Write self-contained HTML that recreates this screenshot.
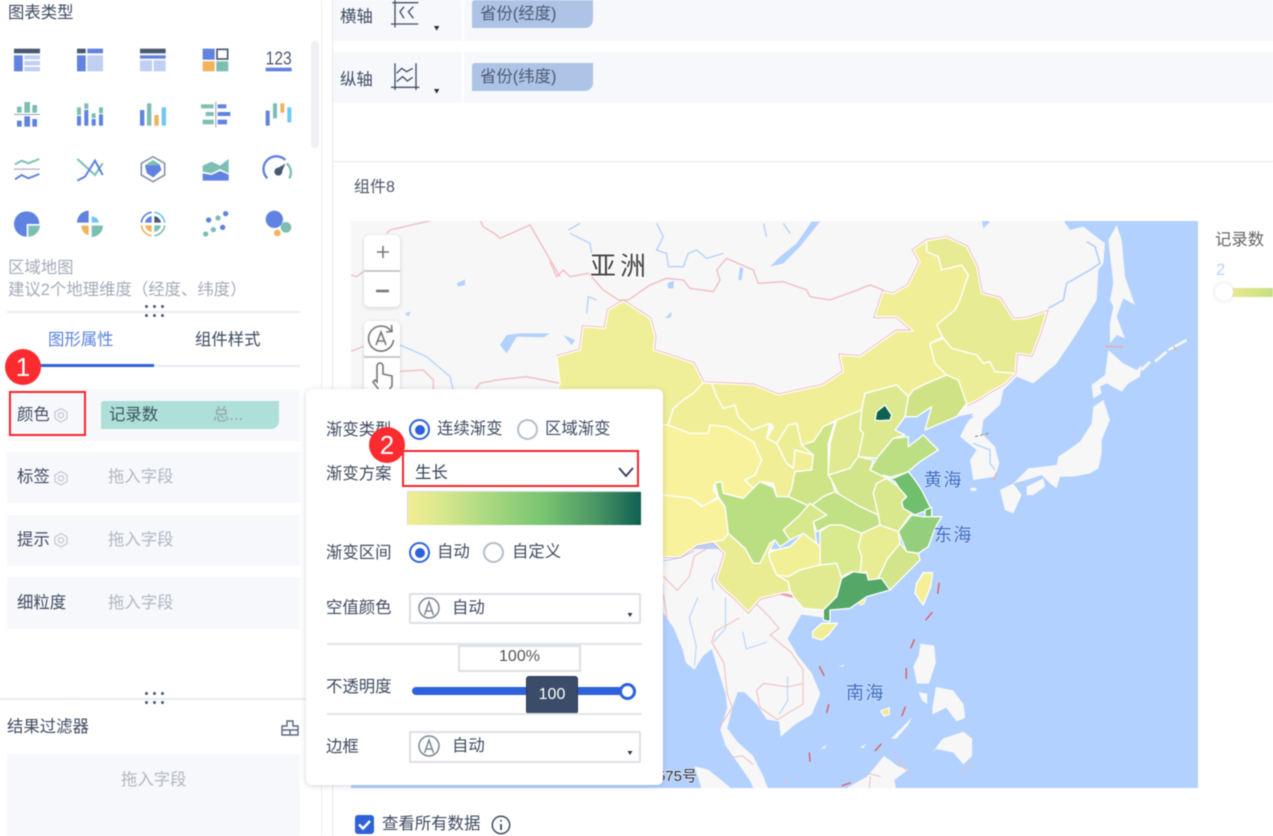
<!DOCTYPE html>
<html lang="zh"><head><meta charset="utf-8"><title>区域地图</title>
<style>
html,body{margin:0;padding:0;background:#fff}
#w{position:relative;width:1273px;height:836px;overflow:hidden;background:#fff;font-family:"Liberation Sans","Noto Sans CJK SC",sans-serif;font-size:16.4px;color:#3f4b60;filter:blur(.45px)}
.t{position:absolute;white-space:nowrap;line-height:20px;height:20px;margin-top:2px}
.b{position:absolute}
.g{color:#b1b6c1}
.row{position:absolute;left:7px;width:293px;background:#f7f8fc}
.pill{position:absolute;background:#aec4e6;border-radius:3px 0 8px 0;width:121px;height:28px;left:472px}
.dots{position:absolute;width:3px;height:3px;background:#4a5872;border-radius:50%;box-shadow:8px 0 #4a5872,16px 0 #4a5872}
.radio{position:absolute;width:21px;height:21px;box-sizing:border-box;border-radius:50%;border:2px solid #b4bccb;background:#fff}
.radio.on{border-color:#2f62d9}
.radio.on:after{content:"";position:absolute;left:3.5px;top:3.5px;width:10px;height:10px;border-radius:50%;background:#2f62d9}
.sel{position:absolute;left:409px;width:232px;box-sizing:border-box;border:2px solid #dde0e6;border-radius:2px;background:#fff}
.hr{position:absolute;left:327px;width:315px;height:2px;background:#e1e4e9}
.badge{position:absolute;width:36px;height:36px;border-radius:50%;background:#fb2b30;color:#fff;font:26px/36px "Liberation Sans",sans-serif;text-align:center}
.red{position:absolute;box-sizing:border-box;border:2px solid #f4252d}
</style></head><body><div id="w">

<!-- MAP -->
<svg class="b" style="left:0;top:0" width="1273" height="836" viewBox="0 0 1273 836">
<defs><clipPath id="mc"><rect x="351" y="221" width="847" height="567"/></clipPath></defs>
<g clip-path="url(#mc)">
<rect x="351" y="221" width="847" height="567" fill="#b3d1ff"/>
<!-- z10 land -->
<g transform="translate(960 220) scale(.33333)" fill="#f7f7f7">
<path d="M-1830,0 L310,0 L330,30 L370,20 L435,70 L430,130 L415,150 L410,240 L350,340 L290,430 L220,490 L170,470 L130,510 L120,555 L70,600 L65,640 L105,680 L118,730 L105,770 L40,780 L30,720 L50,690 L0,650 L15,620 L40,580 L-10,590 L-30,500 L-300,500 L-300,900 L-1830,900 Z"/>
<path d="M470,15 L485,60 L495,170 L525,255 L490,235 L470,290 L495,355 L470,345 L450,370 L450,310 L460,260 L450,240 L460,190 L445,60 Z"/>
<path d="M445,390 L490,430 L530,450 L545,435 L540,470 L505,490 L485,515 L440,490 L420,500 L425,520 L400,535 L395,495 L435,465 Z"/>
<path d="M430,540 L450,600 L425,660 L425,700 L415,745 L390,760 L340,770 L300,770 L290,805 L270,790 L245,765 L200,780 L160,790 L205,745 L290,735 L295,710 L325,690 L360,665 L395,610 L400,560 Z"/>
<path d="M200,800 L250,775 L255,800 L220,825 L200,825 Z"/>
<path d="M120,810 L160,790 L185,825 L160,880 L135,870 Z"/>
<ellipse cx="40" cy="808" rx="10" ry="5"/>
<path d="M545,450 L570,425 M585,425 L620,395 M625,390 L680,360" stroke="#f7f7f7" stroke-width="8" fill="none"/>
<path d="M265,265 L310,240 L320,190 L390,150 L420,130 L405,80 L380,65" stroke="#b3d1ff" stroke-width="5" fill="none"/>
<path d="M0,610 L40,590 M40,670 L90,690 L90,730 L105,750" stroke="#b3d1ff" stroke-width="4" fill="none"/>
<path d="M45,650 L85,640" stroke="#999" stroke-width="4" stroke-dasharray="10 6" fill="none"/>
<path d="M435,380 L490,380 M100,780 L110,758 M640,378 L650,392" stroke="#eba8ad" stroke-width="4" fill="none"/>
<path d="M65,0 L90,5 L70,25Z" fill="#b3d1ff"/>
</g>
<g transform="translate(660 480) scale(.34483)" >
<path d="M-800,300 L10,300 L10,385 L40,430 L65,490 L75,530 L100,550 L125,510 L150,490 L165,540 L190,620 L195,660 L175,725 L190,770 L225,820 L260,870 L285,925 L325,925 L300,860 L270,800 L225,760 L195,720 L210,660 L225,615 L245,615 L280,650 L310,695 L345,700 L350,745 L390,710 L440,680 L465,620 L440,560 L400,510 L370,460 L410,390 L480,400 L480,200 L-800,200 Z" fill="#f7f7f7"/>
<path d="M100,830 L140,840 L190,880 L240,925 L130,925 Z M755,475 L795,480 L800,530 L780,590 L745,590 L735,540 L750,510 Z M750,615 L775,620 L775,650 L760,640 Z M800,600 L850,610 L880,650 L885,690 L860,700 L830,660 L790,680 L790,660 Z M790,790 L820,750 L880,730 L905,750 L905,800 L880,825 L850,790 L800,780 Z M670,750 L730,690 L720,710 L685,750 Z M510,925 L530,900 L600,860 L650,800 L690,830 L720,840 L680,870 L690,925 Z M580,775 L598,765 L590,778 Z M518,540 L535,535 L530,542 Z M465,780 L482,768 L478,778 Z" fill="#f7f7f7"/>
<g fill="none" stroke="#f0bcc0" stroke-width="3">
<path d="M10,280 L50,320 L85,280 L100,220 L150,190"/>
<path d="M20,400 L10,330 M280,360 L320,400 L345,430 L320,450 L380,500 L415,550 L415,590 L370,600 L300,590 L280,610 L290,660 L340,695 L415,650 L415,590"/>
<path d="M230,400 L160,440 L150,470 L185,530 L195,620 L210,660 L170,720"/>
<path d="M200,805 L240,800 L270,825 M610,860 L605,920 M600,850 L640,860 M680,800 L720,850 M905,818 L878,850 M360,880 L368,873 M350,900 L353,920 M470,900 L470,915 M1010,910 L1010,925 L1030,925"/>
</g>
<g fill="none" stroke="#b3d1ff" stroke-width="3">
<path d="M155,320 L150,290 L160,270 M110,340 L85,400 L105,480 L100,540 M190,340 L190,430 L155,470 M10,235 L60,225 L100,205 M240,440 L250,490 L310,470 M370,570 L370,640 L345,680"/>
</g>
<g fill="none" stroke="#e0595f" stroke-width="4">
<path d="M810,298 L805,330 M790,383 L770,407 M738,462 L727,488 M714,545 L714,577 M712,657 L701,685 M642,765 L623,786 M553,878 L527,887 M433,790 L435,817 M490,650 L483,675 M462,540 L476,568"/>
</g>
</g>
<!-- z7 west -->
<g transform="translate(340 220) scale(.33333)" fill="none">
<g stroke="#f0bcc0" stroke-width="4"><path d="M30,165 L50,170 L70,155 M140,40 L150,30 L280,0 M420,0 L430,20 L470,45 L480,55 L570,15 L660,170 M30,395 L70,380 M80,480 L80,460 L250,450 L280,480 L280,510 M405,510 L420,490 L470,480 L560,470 L660,490"/></g>
<path d="M70,405 L180,375 L260,410 L330,470 L340,510" stroke="#b3d1ff" stroke-width="4"/>
<path d="M480,375 L500,345 L540,340 L630,340 L610,352 L530,350 L500,400 Z" fill="#b3d1ff"/>
<path d="M350,190 L375,178 L375,195 L355,200Z M195,280 L212,275 L205,290Z" fill="#b3d1ff"/>
</g>
<!-- z5 north -->
<g transform="translate(550 220) scale(.33333)" fill="none">
<g stroke="#f0bcc0" stroke-width="4"><path d="M0,125 L20,170 L40,150 L60,170 L115,160 L160,210 L205,240 L235,240 L300,195 L350,175 L400,180 L420,205 L490,215 L510,180 L500,150 L530,115 L610,150 L625,190 L700,185 L770,210 L780,230 L840,240 L910,215 L960,195 L1000,210"/></g>
<g stroke="#b3d1ff" stroke-width="4"><path d="M55,30 L90,10 M60,40 L120,70 L125,100 M320,10 L340,50 L320,90 L350,100 L355,140 L400,140 L415,100 L440,90 L470,115 L520,100 M110,280 L115,230 L140,240 M640,10 L650,50 M700,10 L720,40"/></g>
<path d="M660,140 L700,130 L750,80 L810,5 L785,5 L740,70 L690,110 Z M352,190 L372,182 L370,205 L355,205 Z M565,180 L570,140 L580,145 L575,180 Z M40,345 L75,360 L65,375 Z M345,295 L365,275 L362,292 Z" fill="#b3d1ff"/>
</g>
<!-- China -->
<g transform="translate(660 400) scale(.33333)">
<path d="M-310,-130 L-240,-150 L-230,-220 L-165,-215 L-155,-270 L-110,-297 L-30,-245 L-15,-190 L-20,-150 L100,-110 L130,-52 L280,-45 L355,-15 L490,-45 L550,-85 L540,-135 L600,-130 L710,-207 L760,-207 L710,-250 L645,-250 L670,-325 L700,-318 L745,-345 L780,-415 L760,-450 L800,-478 L860,-488 L920,-460 L950,-400 L965,-320 L1020,-305 L1060,-242 L1100,-245 L1160,-265 L1140,-200 L1115,-135 L1070,-140 L1065,-80 L1035,-50 L990,-25 L960,-5 L920,15" fill="none" stroke="#f0a6ab" stroke-width="8"/>
<path d="M-20,470 L60,470 L110,435 L160,425 L195,460 L170,540 L190,565 L220,590 L265,635 L300,595 L360,580 L400,590" fill="none" stroke="#ee9fa5" stroke-width="8"/>
<g stroke="#fff" stroke-width="4" stroke-linejoin="round">
<polygon fill="#f0ef99" points="-310,-130 -240,-150 -230,-220 -165,-215 -155,-270 -110,-297 -30,-245 -15,-190 -20,-150 100,-110 130,-52 100,-20 70,0 40,25 25,75 -350,75 -300,-50"/>
<polygon fill="#f8f29d" points="-350,75 25,75 90,100 145,100 150,75 200,80 280,125 305,180 285,225 255,240 285,270 300,245 250,295 190,280 185,245 165,250 160,270 175,290 130,320 95,295 10,285 -350,285"/>
<polygon fill="#f8f29d" points="-350,285 10,285 95,295 125,320 175,295 195,320 205,400 190,420 160,425 110,435 60,470 -350,470"/>
<polygon fill="#f0ef98" points="25,75 40,25 70,0 100,-20 130,-52 155,-50 170,-10 190,25 225,15 235,50 275,90 330,70 320,115 350,130 380,190 400,205 405,150 460,165 455,210 405,215 395,265 385,290 350,290 340,250 300,245 285,270 255,240 285,225 305,180 280,125 200,80 150,75 145,100 90,100"/>
<polygon fill="#f0ef98" points="130,-52 280,-45 355,-15 490,-45 550,-85 540,-135 600,-130 710,-207 760,-207 710,-250 645,-250 670,-325 700,-318 745,-345 780,-415 760,-450 800,-478 800,-445 835,-430 845,-390 905,-405 925,-375 900,-300 885,-270 830,-225 850,-190 810,-170 825,-110 860,-75 800,-50 760,-30 745,-10 710,-45 615,-20 605,30 530,60 490,80 460,125 425,135 410,70 385,75 350,130 320,115 340,80 330,70 275,90 235,50 225,15 190,25 170,-10 155,-50"/>
<polygon fill="#e7ec94" points="800,-478 860,-488 920,-460 950,-400 965,-320 1020,-305 1060,-242 1100,-245 1160,-265 1140,-200 1115,-135 1070,-140 1065,-80 1005,-85 990,-115 970,-110 950,-135 875,-155 850,-185 830,-225 885,-270 900,-300 925,-375 905,-405 845,-390 835,-430 800,-445"/>
<polygon fill="#ebee96" points="850,-185 875,-155 950,-135 970,-110 990,-115 1005,-85 1065,-80 1035,-50 990,-25 960,-5 920,15 905,-30 895,-60 860,-75 825,-110 810,-170"/>
<polygon fill="#cfe386" points="860,-75 895,-60 920,10 890,50 795,90 815,20 770,50 735,50 745,-10 760,-30 800,-50"/>
<polygon fill="#dde98f" points="615,-20 710,-45 745,-10 735,50 705,90 735,105 700,115 650,175 595,170 610,100 600,90 605,30"/>
<polygon fill="#ecee96" points="350,130 385,75 410,70 425,135 460,165 405,150 400,205 380,190"/>
<polygon fill="#e1ea90" points="530,60 605,30 600,90 610,100 595,170 570,205 505,225 510,130"/>
<polygon fill="#cfe487" points="525,65 505,130 505,225 515,240 525,275 490,290 450,320 385,290 395,265 405,215 455,210 460,165 425,135 460,125 490,80"/>
<polygon fill="#bbdf82" points="630,210 650,175 700,115 745,110 745,140 790,105 835,150 780,185 745,215 715,225 680,235 660,225"/>
<polygon fill="#d2e58a" points="505,225 570,205 595,170 640,180 630,210 660,225 680,235 650,250 640,280 655,345 600,320 540,290 515,240"/>
<polygon fill="#d9e88d" points="640,280 650,250 680,235 715,260 740,285 725,310 765,345 750,345 715,395 660,375 655,345"/>
<polygon fill="#6fbf6f" points="670,225 700,235 745,215 765,240 785,270 810,320 815,340 790,335 765,345 730,325 725,305 740,290 718,265 705,245"/>
<polygon fill="#6fbf6f" points="795,330 815,322 815,350 795,350"/>
<polygon fill="#c2e084" points="450,320 490,290 525,275 600,320 655,345 660,375 605,400 545,375 510,375 470,395 460,365 500,345"/>
<polygon fill="#94d07c" points="755,345 790,350 845,350 825,385 805,440 775,460 740,455 715,395"/>
<polygon fill="#e8ec93" points="605,400 660,375 715,395 720,430 680,480 655,535 625,545 620,515 600,520 605,470 595,440"/>
<polygon fill="#d2e58a" points="720,430 740,455 775,460 780,480 740,520 690,570 655,535 680,480"/>
<polygon fill="#d9e98d" points="480,395 510,375 545,375 605,400 595,440 605,470 600,520 575,515 535,535 530,490 480,495 480,440"/>
<polygon fill="#bade82" points="165,250 185,245 190,280 250,295 300,245 340,262 350,290 385,290 450,320 415,350 370,390 390,420 360,440 345,420 330,430 300,490 280,490 255,445 205,400 195,320 175,290"/>
<polygon fill="#d8e88c" points="370,390 415,350 450,310 500,345 460,365 470,430 430,400 390,420"/>
<polygon fill="#f2f097" points="325,460 345,450 390,440 430,400 470,430 480,440 480,495 420,510 385,530 350,525 330,480"/>
<polygon fill="#e9ec93" points="205,400 255,445 280,490 300,490 330,430 345,420 325,460 330,480 350,525 385,545 390,575 360,580 300,595 265,635 220,590 190,565 170,540 195,460 160,425 190,420"/>
<polygon fill="#e1ea90" points="350,525 385,530 420,510 480,495 530,490 545,535 530,590 490,630 430,625 400,590 390,570 385,545"/>
<polygon fill="#55a768" points="545,535 580,515 620,520 625,540 665,535 690,570 620,590 570,625 510,630 510,665 490,660 490,630 530,590"/>
<polygon fill="#f5ef98" points="790,518 818,518 812,560 790,615 765,580 770,550"/>
<polygon fill="#f0ee94" points="458,695 485,670 532,670 505,705 485,720 458,712"/>
<polygon fill="#0f6150" points="645,60 650,35 675,15 695,45 690,60 660,62"/>
<polygon fill="#f0ee94" points="598,605 618,598 612,612 600,615" stroke-width="2"/>
</g>
</g>
<g transform="translate(660 480) scale(.34483)"><polygon fill="#f0ea8e" stroke="#fff" stroke-width="3" points="640,670 665,660 665,680 650,685"/></g>
</g>
<!-- map labels -->
<g font-family="'Liberation Sans','Noto Sans CJK SC',sans-serif" paint-order="stroke" stroke="#fff" stroke-width="2.5" stroke-linejoin="round">
<text x="590" y="275" font-size="26" fill="#444" letter-spacing="4">亚洲</text>
<g font-size="18" fill="#3e70c0" letter-spacing="1.5" stroke="#c9dcff" stroke-width="1.5">
<text x="924" y="486">黄海</text><text x="934" y="541">东海</text><text x="846" y="699">南海</text>
</g>
<text x="697" y="781" font-size="15" fill="#333" text-anchor="end" stroke="#d9e6ff" stroke-width="1.5">575号</text>
</g>
</svg>

<!-- top axes -->
<div class="b" style="left:332px;top:0;width:941px;height:41px;background:#f7f8fc"></div>
<div class="b" style="left:332px;top:52px;width:941px;height:51px;background:#f7f8fc"></div>
<div class="b" style="left:462px;top:0;width:2px;height:103px;background:#fff"></div>
<div class="b" style="left:332px;top:41px;width:941px;height:11px;background:#fff"></div>
<div class="t" style="left:340px;top:5px">横轴</div>
<div class="t" style="left:340px;top:68px">纵轴</div>
<div class="pill" style="top:0"></div><div class="t" style="left:480px;top:2px;color:#4a5a75">省份(经度)</div>
<div class="pill" style="top:63px"></div><div class="t" style="left:480px;top:65px;color:#4a5a75">省份(纬度)</div>
<svg class="b" style="left:330px;top:0" width="120" height="100" viewBox="0 0 360 300" fill="none" stroke="#3f4e6a" stroke-width="4">
<path d="M187,8 H265 M183,72 H265 M195,0 V82 M222,20 L210,35 L222,55 M250,20 L235,35 L250,55"/>
<path d="M195,190 V270 M258,190 V270 M183,262 H268 M200,220 L215,205 L230,215 L248,205 M200,245 L218,230 L232,243 L248,232"/>
<path d="M312,78 H328 L320,92Z M312,267 H328 L320,281Z" fill="#1f2c45" stroke="none"/>
</svg>

<!-- component frame -->
<div class="b" style="left:332px;top:161px;width:941px;height:1px;background:#e8e9ee"></div>
<div class="b" style="left:321px;top:0;width:1px;height:836px;background:#eceef2"></div>
<div class="b" style="left:332px;top:0;width:1px;height:836px;background:#e8e9ee"></div>
<div class="t" style="left:354px;top:176px;font-size:16px;color:#4a5568">组件8</div>

<!-- legend -->
<div class="t" style="left:1215px;top:228px;color:#666">记录数</div>
<div class="t" style="left:1216px;top:258px;color:#b8d2f4">2</div>
<div class="b" style="left:1230px;top:288px;width:43px;height:9px;background:linear-gradient(90deg,#ece98f,#c5e082)"></div>
<div class="b" style="left:1215px;top:283px;width:18px;height:18px;border-radius:50%;background:#fff;box-shadow:0 0 4px #d8dbe3"></div>

<!-- map controls -->
<div class="b" style="left:364px;top:235px;width:36px;height:72px;background:#fff;border-radius:5px;box-shadow:0 1px 4px rgba(0,0,0,.16)"></div>
<div class="b" style="left:364px;top:270px;width:36px;height:2px;background:#c9c9c9"></div>
<div class="b" style="left:364px;top:321px;width:36px;height:80px;background:#fff;border-radius:5px;box-shadow:0 1px 4px rgba(0,0,0,.16)"></div>
<div class="b" style="left:364px;top:356px;width:36px;height:2px;background:#c9c9c9"></div>
<svg class="b" style="left:364px;top:235px" width="36" height="160" viewBox="0 0 36 160" fill="none" stroke="#777" stroke-width="1.6">
<path d="M13,17 H25 M19,11 V23"/><path d="M12,56 H25" stroke-width="2.6"/>
<path d="M27,96 A12.5,12.5 0 1 0 29.5,105"/>
<path d="M27.5,90 L28,96.5 L22,97"/>
<path d="M12,110 L17,97 L22,110 M14,106 H20"/>
<path d="M13,147 V131 a3,3 0 0 1 6,0 V139 L28,141 V151 L25,155 H15 L9,147 L11,145 Z"/>
</svg>

<!-- LEFT PANEL -->
<div class="b" style="left:0;top:0;width:305px;height:836px;background:#fff"></div>
<div class="t" style="left:8px;top:1px">图表类型</div>
<div class="b" style="left:311px;top:41px;width:8px;height:107px;border-radius:4px;background:#eef0f3"></div>
<svg class="b" style="left:0;top:0" width="320" height="250" viewBox="0 0 960 750">
<g fill="#6082e0">
<rect x="42" y="146" width="78" height="14" fill="#4a5872"/><rect x="42" y="166" width="26" height="48"/><rect x="73" y="166" width="47" height="12" fill="#c0cff2"/><rect x="73" y="183" width="47" height="13" fill="#c0cff2"/><rect x="73" y="201" width="47" height="13" fill="#c0cff2"/>
<rect x="231" y="146" width="26" height="14" fill="#4a5872"/><rect x="262" y="146" width="47" height="14"/><rect x="231" y="166" width="26" height="48"/><rect x="262" y="166" width="47" height="48" fill="#c0cff2"/>
<rect x="420" y="146" width="77" height="14" fill="#4a5872"/><rect x="420" y="166" width="77" height="10"/><rect x="420" y="181" width="36" height="33" fill="#c0cff2"/><rect x="461" y="181" width="36" height="33" fill="#c0cff2"/>
<rect x="608" y="146" width="36" height="33"/><rect x="651" y="148" width="32" height="29" fill="none" stroke="#4a5872" stroke-width="5"/><rect x="608" y="184" width="36" height="30" fill="#f0b35e"/><rect x="649" y="184" width="36" height="30" fill="#7cbfb2"/>
<rect x="797" y="203" width="78" height="11"/>
</g>
<text x="797" y="193" font-family="'Liberation Sans',sans-serif" font-size="56" fill="#4a5872" textLength="78" lengthAdjust="spacingAndGlyphs">123</text>
<g fill="#7cbfb2"><rect x="51" y="320" width="14" height="18"/><rect x="73" y="306" width="17" height="32"/><rect x="97" y="315" width="14" height="23"/>
<rect x="231" y="322" width="12" height="23"/><rect x="253" y="310" width="12" height="17"/><rect x="275" y="340" width="12" height="14"/><rect x="297" y="322" width="12" height="18"/>
<rect x="441" y="310" width="13" height="67"/><rect x="603" y="313" width="38" height="12"/><rect x="617" y="336" width="24" height="12"/><rect x="608" y="359" width="33" height="14"/><rect x="819" y="310" width="12" height="45"/></g>
<rect x="42" y="342" width="78" height="3" fill="#9aa3b5"/><rect x="646" y="305" width="3" height="77" fill="#9aa3b5"/>
<g fill="#6082e0"><rect x="51" y="362" width="14" height="18"/><rect x="73" y="349" width="17" height="31"/><rect x="97" y="357" width="14" height="23"/>
<rect x="231" y="348" width="12" height="29"/><rect x="253" y="330" width="12" height="47"/><rect x="275" y="357" width="12" height="20"/><rect x="297" y="343" width="12" height="34"/>
<rect x="420" y="330" width="13" height="47"/><rect x="653" y="313" width="26" height="12"/><rect x="653" y="336" width="38" height="12"/><rect x="653" y="359" width="28" height="14"/><rect x="797" y="332" width="12" height="45"/></g>
<rect x="463" y="345" width="13" height="32" fill="#f0b35e"/><rect x="841" y="310" width="12" height="28" fill="#f0b35e"/>
<rect x="485" y="322" width="13" height="55" fill="#6cc8f5"/><rect x="862" y="322" width="12" height="45" fill="#6cc8f5"/>
<g fill="none" stroke-width="6">
<path d="M45,493 L65,482 L85,490 L118,477" stroke="#7cbfb2"/><path d="M45,538 L65,525 L85,535 L118,522" stroke="#6082e0"/><rect x="42" y="506" width="78" height="3" fill="#9aa3b5" stroke="none"/>
<path d="M232,477 L285,525 L308,490" stroke="#7cbfb2"/><path d="M232,542 L255,530 L285,482 L308,525" stroke="#6082e0"/>
<path d="M459,470 L494,490 L494,525 L459,545 L424,525 L424,490Z" stroke="#8a94a8" stroke-width="5"/>
<path d="M802,535 A36,36 0 0 1 856,480" stroke="#6082e0" stroke-width="7"/><path d="M860,490 A36,36 0 0 1 868,535" stroke="#7cbfb2" stroke-width="7"/>
</g>
<path d="M435,495 L459,480 L478,492 L484,510 L460,532 L441,520Z" fill="#7cbfb2"/><path d="M435,497 L480,495 L484,510 L460,532 L441,520Z" fill="#6082e0"/>
<path d="M608,497 L635,485 L660,497 L686,477 L686,520 L660,507 L635,520 L608,515Z" fill="#7cbfb2"/><path d="M608,520 L635,525 L660,513 L686,524 L686,542 L608,542Z" fill="#6082e0"/>
<circle cx="835" cy="515" r="12" fill="#4a5872"/><path d="M826,508 L856,491 L843,522Z" fill="#4a5872"/>
<path d="M80,672 V710 A38,38 0 1 1 118,672 Z" fill="#6082e0"/><path d="M85,677 H120 A35,35 0 0 1 85,710Z" fill="#7cbfb2"/>
<path d="M266,668 V632 A36,36 0 0 0 231,668Z" fill="#6082e0"/><path d="M275,668 V649 A22,22 0 0 1 297,668Z" fill="#6cc8f5"/><path d="M266,677 H244 A24,28 0 0 0 266,705Z" fill="#f0b35e"/><path d="M275,677 H309 A34,34 0 0 1 275,711Z" fill="#7cbfb2"/>
<g fill="none" stroke-width="5"><path d="M455,637 A35,35 0 0 0 424,668" stroke="#6082e0"/><path d="M463,637 A35,35 0 0 1 494,668" stroke="#6cc8f5"/><path d="M424,676 A35,35 0 0 0 455,707" stroke="#f0b35e"/><path d="M463,707 A35,35 0 0 0 494,676" stroke="#7cbfb2"/></g>
<path d="M455,668 V648 A24,24 0 0 0 435,668Z" fill="#6082e0"/><path d="M463,668 V648 A24,24 0 0 1 483,668Z" fill="#4a5872"/><path d="M455,676 H435 A24,24 0 0 0 455,696Z" fill="#f0b35e"/><path d="M463,676 H483 A24,24 0 0 1 463,696Z" fill="#7cbfb2"/>
<g fill="#6082e0"><circle cx="626" cy="660" r="8"/><circle cx="677" cy="641" r="8"/><circle cx="668" cy="682" r="8"/></g>
<g fill="#7cbfb2"><circle cx="654" cy="654" r="8"/><circle cx="617" cy="702" r="8"/><circle cx="640" cy="689" r="8"/></g>
<circle cx="823" cy="658" r="26" fill="#6082e0"/><circle cx="858" cy="682" r="16" fill="#7cbfb2"/><circle cx="832" cy="699" r="10" fill="#f0b35e"/>
</svg>
<div class="t" style="left:8px;top:256px;color:#a4abb9">区域地图</div>
<div class="t" style="left:8px;top:278px;color:#a4abb9">建议2个地理维度（经度、纬度）</div>

<div class="dots" style="left:145px;top:305px"></div>
<div class="b" style="left:7px;top:311px;width:293px;height:2px;background:#e8ebf1"></div>
<div class="dots" style="left:145px;top:314px"></div>

<div class="t" style="left:48px;top:328px;color:#5b83dd">图形属性</div>
<div class="t" style="left:195px;top:328px;color:#3d4a60">组件样式</div>
<div class="b" style="left:7px;top:365px;width:293px;height:2px;background:#e8ebf1"></div>
<div class="b" style="left:7px;top:364px;width:147px;height:3px;background:#2f62d9"></div>

<div class="row" style="top:389px;height:52px"></div>
<div class="row" style="top:452px;height:51px"></div>
<div class="row" style="top:515px;height:51px"></div>
<div class="row" style="top:577px;height:52px"></div>
<div class="t" style="left:17px;top:403px">颜色</div>
<div class="t" style="left:17px;top:465px">标签</div>
<div class="t" style="left:17px;top:528px">提示</div>
<div class="t" style="left:17px;top:591px">细粒度</div>
<svg class="b" style="left:0;top:400px" width="80" height="160" viewBox="0 0 80 160" fill="none" stroke="#c6cad2" stroke-width="1.3">
<g><path d="M61,8.5 L67,12 V18.5 L61,22 L55,18.5 V12Z"/><circle cx="61" cy="15.2" r="2.6"/></g>
<g transform="translate(0,63)"><path d="M61,8.5 L67,12 V18.5 L61,22 L55,18.5 V12Z"/><circle cx="61" cy="15.2" r="2.6"/></g>
<g transform="translate(0,125)"><path d="M61,8.5 L67,12 V18.5 L61,22 L55,18.5 V12Z"/><circle cx="61" cy="15.2" r="2.6"/></g>
</svg>
<div class="b" style="left:101px;top:401px;width:178px;height:28px;background:#aedfd8;border-radius:3px 0 8px 0"></div>
<div class="t" style="left:109px;top:403px;color:#3d5560">记录数</div>
<div class="t" style="left:213px;top:403px;color:#8fa5a5">总...</div>
<div class="t g" style="left:108px;top:465px">拖入字段</div>
<div class="t g" style="left:108px;top:528px">拖入字段</div>
<div class="t g" style="left:108px;top:591px">拖入字段</div>

<div class="dots" style="left:145px;top:692px"></div>
<div class="b" style="left:0;top:698px;width:306px;height:2px;background:#e8ebf1"></div>
<div class="dots" style="left:145px;top:701px"></div>
<div class="t" style="left:7px;top:715px">结果过滤器</div>
<svg class="b" style="left:280px;top:718px" width="20" height="20" viewBox="0 0 20 20" fill="none" stroke="#5a6780" stroke-width="1.4"><path d="M2,8 H7 V3 H13 V8 H18 V17 H2Z M2,12 H18 M10,12 V17"/></svg>
<div class="b" style="left:7px;top:754px;width:293px;height:82px;background:#f7f8fc"></div>
<div class="t g" style="left:121px;top:768px">拖入字段</div>

<!-- bottom -->
<div class="b" style="left:355px;top:815px;width:19px;height:19px;border-radius:3px;background:#2f62d9"></div>
<svg class="b" style="left:355px;top:815px" width="19" height="19" fill="none" stroke="#fff" stroke-width="2.4"><path d="M4,9.5 L8,13.5 L15,6"/></svg>
<div class="t" style="left:382px;top:812px">查看所有数据</div>
<svg class="b" style="left:491px;top:815px" width="20" height="20" fill="none" stroke="#3f4b60" stroke-width="1.5"><circle cx="10" cy="10" r="8.7"/><path d="M10,9 V15" stroke-width="1.8"/><circle cx="10" cy="5.8" r="1" fill="#3f4b60" stroke="none"/></svg>

<!-- POPUP -->
<div class="b" style="left:306px;top:389px;width:357px;height:396px;background:#fff;border-radius:6px;box-shadow:0 1px 6px rgba(60,70,90,.22)"></div>
<div class="t" style="left:326px;top:418px">渐变类型</div>
<div class="radio on" style="left:409px;top:419px"></div><div class="t" style="left:437px;top:417px">连续渐变</div>
<div class="radio" style="left:517px;top:419px"></div><div class="t" style="left:545px;top:417px">区域渐变</div>
<div class="t" style="left:326px;top:462px">渐变方案</div>
<div class="t" style="left:415px;top:461px;color:#33415a">生长</div>
<svg class="b" style="left:615px;top:464px" width="22" height="16" fill="none" stroke="#2f3d58" stroke-width="1.8"><path d="M4,4 L11,12 L18,4"/></svg>
<div class="b" style="left:407px;top:491px;width:234px;height:34px;box-sizing:border-box;border-top:1px solid #d5d9e0;border-left:1px solid #d5d9e0;background:linear-gradient(90deg,#f2ee93 0%,#d8e78d 15%,#a8d880 35%,#78c570 58%,#4c9865 80%,#0f5f52 100%)"></div>
<div class="t" style="left:326px;top:541px">渐变区间</div>
<div class="radio on" style="left:409px;top:542px"></div><div class="t" style="left:437px;top:540px">自动</div>
<div class="radio" style="left:483px;top:542px"></div><div class="t" style="left:512px;top:540px">自定义</div>
<div class="t" style="left:326px;top:596px">空值颜色</div>
<div class="sel" style="top:593px;height:31px"></div>
<div class="t" style="left:452px;top:596px">自动</div>
<div class="hr" style="top:643px"></div>
<div class="b" style="left:458px;top:645px;width:123px;height:27px;box-sizing:border-box;border:2px solid #dcdfe5;text-align:center;font-size:16px;line-height:20px;color:#555">100%</div>
<div class="t" style="left:326px;top:675px">不透明度</div>
<div class="b" style="left:412px;top:687px;width:216px;height:8px;border-radius:4px;background:#2d62db"></div>
<div class="b" style="left:619px;top:683px;width:17px;height:17px;box-sizing:border-box;border:3px solid #2d62db;border-radius:50%;background:#fff"></div>
<div class="b" style="left:526px;top:676px;width:52px;height:38px;background:#3a4c68;border-radius:3px;border:1px solid #2c3a52;box-sizing:border-box;color:#fff;text-align:center;line-height:36px;font-size:16px">100</div>
<div class="hr" style="top:713px"></div>
<div class="t" style="left:326px;top:735px">边框</div>
<div class="sel" style="top:731px;height:32px"></div>
<div class="t" style="left:452px;top:734px">自动</div>
<svg class="b" style="left:415px;top:595px" width="225" height="170" fill="none" stroke="#7d8594" stroke-width="1.5">
<circle cx="14" cy="13" r="10"/><path d="M9.5,20 L14,7 L18.5,20 M11,16 H17"/>
<circle cx="14" cy="151" r="10"/><path d="M9.5,158 L14,145 L18.5,158 M11,154 H17"/>
<path d="M212.5,18 H217.5 L215,22Z M212.5,156 H217.5 L215,160Z" fill="#2a3650" stroke="none"/>
</svg>

<!-- annotations -->
<div class="red" style="left:9px;top:391px;width:77px;height:45px"></div>
<div class="red" style="left:402px;top:450px;width:237px;height:37px"></div>
<div class="badge" style="left:5px;top:349px">1</div>
<div class="badge" style="left:369px;top:427px">2</div>
</div></body></html>
